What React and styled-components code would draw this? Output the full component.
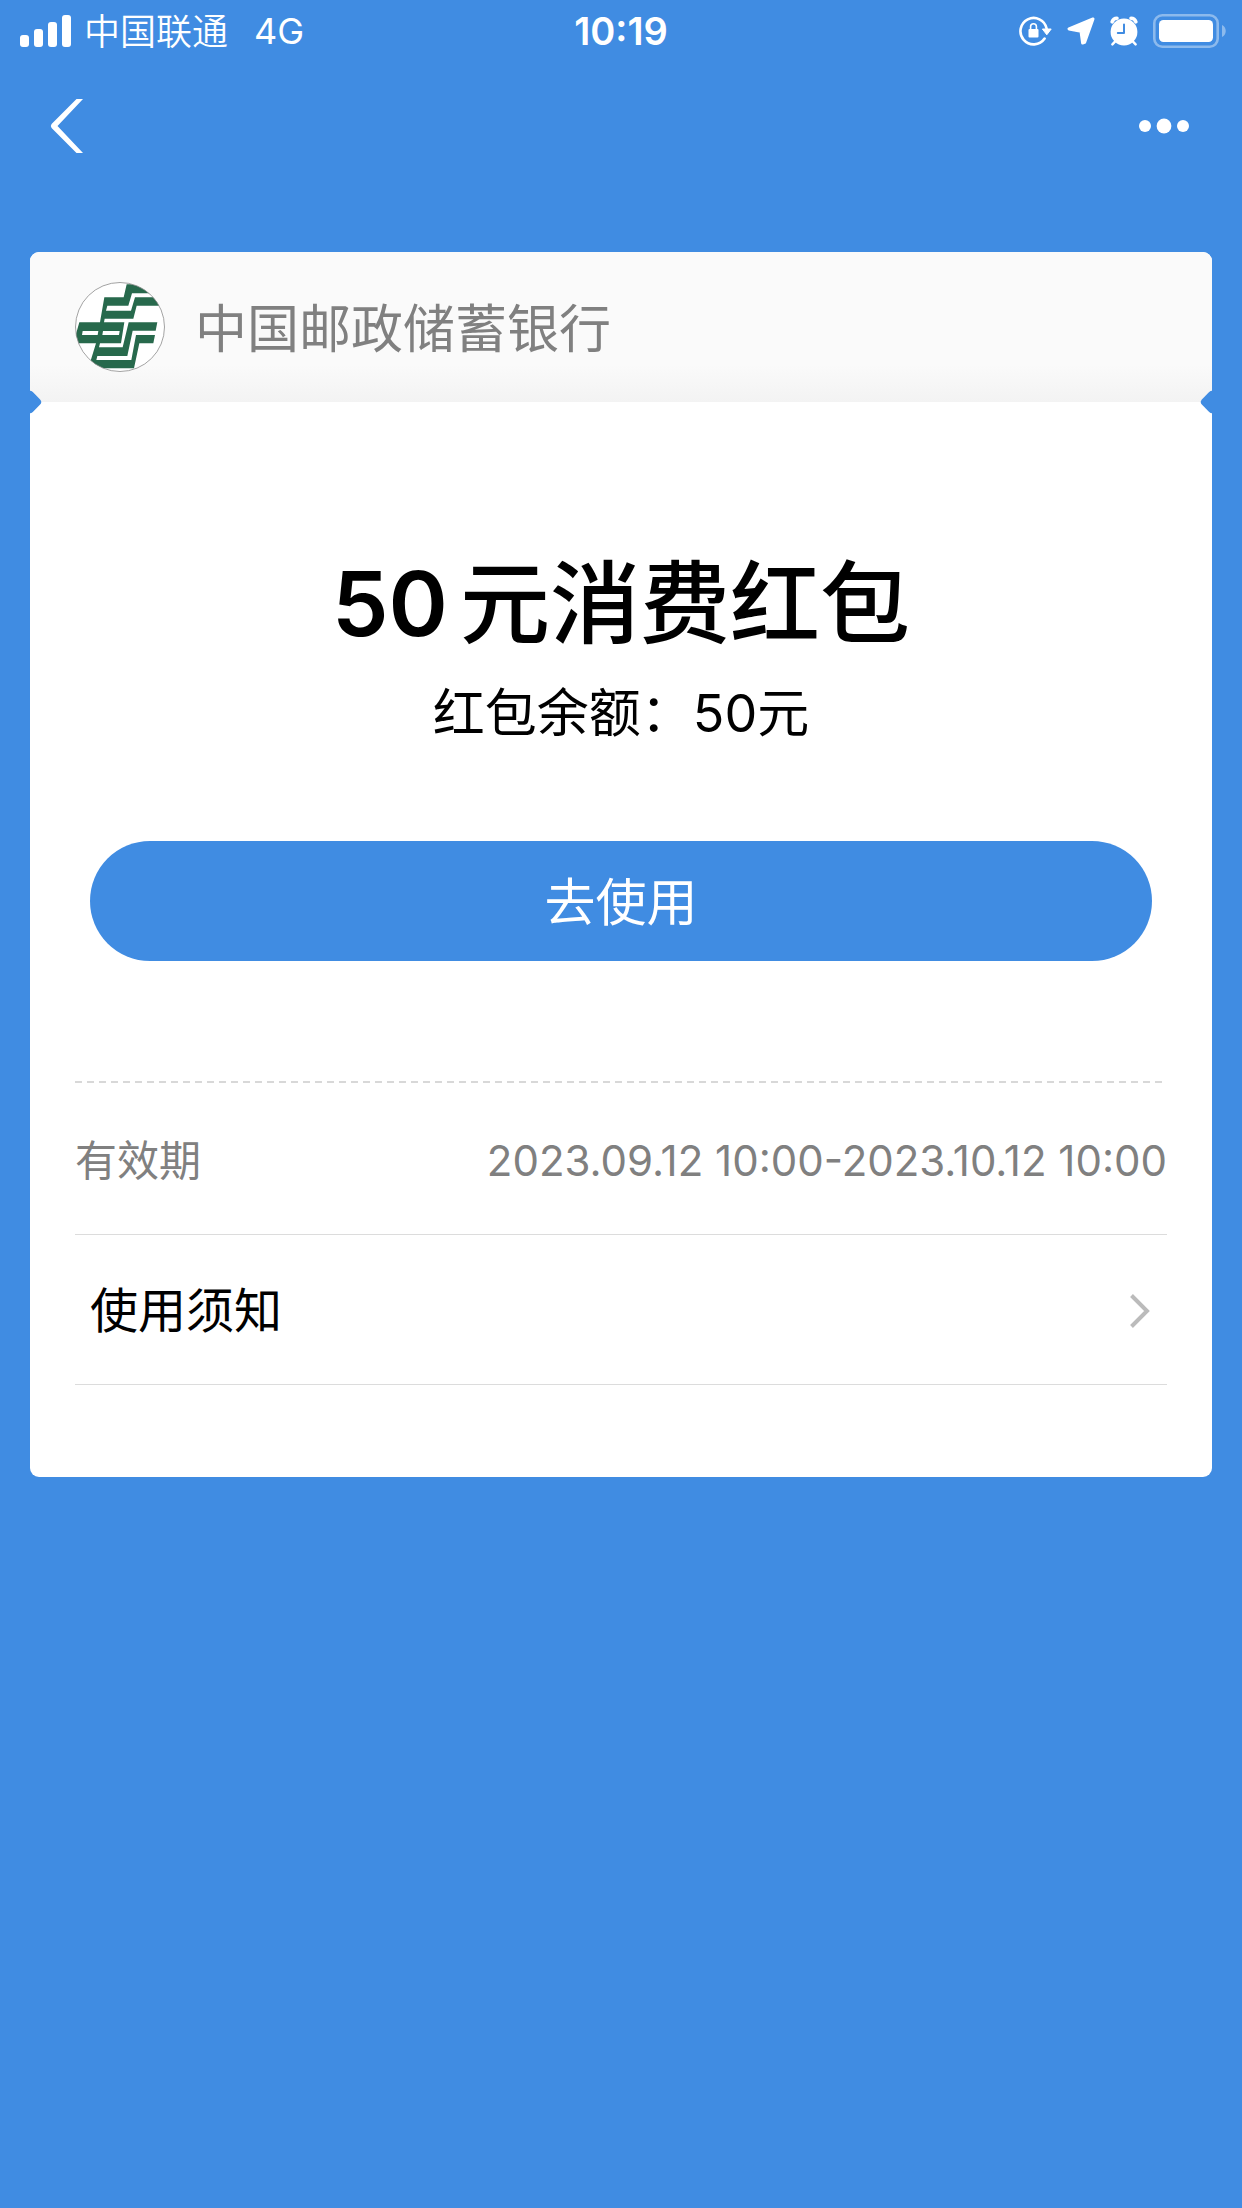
import React from "react";
import styled, { createGlobalStyle } from "styled-components";

const BLUE = "#408ce2";

const GlobalStyle = createGlobalStyle`
  * { box-sizing: border-box; }
  body {
    margin: 0;
    background: ${BLUE};
    font-family: Inter, "Noto Sans CJK SC", sans-serif;
    color: #000;
  }
  h1, h2, p, dl, dt, dd { margin: 0; font-weight: 400; }
  button { font: inherit; border: 0; padding: 0; background: none; cursor: pointer; }
  svg { display: block; flex: none; }
`;

const Page = styled.div`
  min-height: 100vh;
  display: flex;
  flex-direction: column;
`;

const StatusBar = styled.div`
  display: grid;
  grid-template-columns: 1fr auto 1fr;
  align-items: center;
  height: 62px;
  padding: 0 16px;
  color: #fff;
  font-size: 36px;
  line-height: 48px;
`;

const StatusSide = styled.div`
  display: flex;
  align-items: center;
  justify-content: ${(p) => (p.$end ? "flex-end" : "flex-start")};
  gap: ${(p) => (p.$end ? "15px" : "12px")};
  padding-left: 4px;
`;

const Carrier = styled.span`
  padding-top: 2px;
  font-weight: 350;
`;

const Network = styled.span`
  padding-left: 14px;
`;

const Clock = styled.time`
  font-size: 38px;
  font-weight: 600;
`;

const NavBar = styled.nav`
  display: flex;
  justify-content: space-between;
  align-items: center;
  height: 128px;
  padding: 0 49px 0 48px;
`;

const IconButton = styled.button`
  display: flex;
  align-items: center;
  height: 64px;
`;

const Card = styled.main`
  margin: 62px 30px 0;
  border-radius: 9px;
  overflow: hidden;
  background: #fff;
`;

const Issuer = styled.header`
  position: relative;
  display: flex;
  align-items: center;
  gap: 30px;
  height: 150px;
  padding: 0 45px;
  background: linear-gradient(#fafafa 75%, #f3f3f3);
  color: #808080;
  font-size: 52px;
  line-height: 72px;

  &::before,
  &::after {
    content: "";
    position: absolute;
    bottom: -9px;
    width: 18px;
    height: 18px;
    border-radius: 4px;
    background: ${BLUE};
    transform: rotate(45deg);
  }
  &::before { left: -9px; }
  &::after { right: -9px; }
`;

const IssuerName = styled.h2`
  padding-top: 6px;
  font-size: 52px;
`;

const Offer = styled.section`
  display: flex;
  flex-direction: column;
  align-items: center;
  padding: 142px 60px 120px;
`;

const OfferTitle = styled.h1`
  font-size: 90px;
  font-weight: 500;
  line-height: 120px;
`;

const Amount = styled.span`
  padding-right: 12px;
  font-weight: 600;
`;

const Balance = styled.p`
  padding-top: 14px;
  font-size: 52px;
  line-height: 72px;
`;

const UseButton = styled.button`
  && {
    width: 100%;
    height: 120px;
    margin-top: 91px;
    padding-top: 4px;
    border-radius: 60px;
    background: ${BLUE};
    color: #fff;
    font-size: 51px;
    line-height: 72px;
  }
`;

const Details = styled.section`
  padding: 0 45px 92px;
`;

const DashedRule = styled.div`
  height: 2px;
  background: repeating-linear-gradient(90deg, #d8d8d8 0 7px, transparent 7px 12px);
`;

const Validity = styled.dl`
  display: flex;
  justify-content: space-between;
  align-items: center;
  height: 152px;
  padding-top: 4px;
  border-bottom: 1px solid #dcdcdc;
  color: #808080;
  font-size: 42px;
  line-height: 60px;
`;

const NoticeRow = styled.button`
  && {
    display: flex;
    justify-content: space-between;
    align-items: center;
    width: 100%;
    height: 150px;
    padding: 2px 15px 0;
    border-bottom: 1px solid #dcdcdc;
    color: #000;
    font-size: 48px;
    line-height: 72px;
  }
`;

const SignalIcon = () => (
  <svg width="52" height="32" viewBox="0 0 52 32" fill="#fff">
    <rect x="0" y="20" width="9" height="12" rx="3" />
    <rect x="14" y="14" width="9" height="18" rx="3" />
    <rect x="28" y="7" width="9" height="25" rx="3" />
    <rect x="42" y="0" width="9" height="32" rx="3" />
  </svg>
);

const RotationLockIcon = () => (
  <svg width="33" height="30" viewBox="0 0 33 30" fill="none">
    <path d="M25.6 22.6A13.2 13.2 0 1 1 27.6 12.5" stroke="#fff" strokeWidth="2.6" strokeLinecap="round" />
    <path d="M23.4 13H32.2L27.8 18.8Z" fill="#fff" stroke="#fff" strokeLinejoin="round" />
    <rect x="9.5" y="13" width="10" height="8.5" rx="1" fill="#fff" />
    <path d="M11.6 13.5V10.6a2.9 2.9 0 0 1 5.8 0v2.9" stroke="#fff" strokeWidth="1.6" />
  </svg>
);

const LocationIcon = () => (
  <svg width="28" height="28" viewBox="0 0 28 28">
    <path d="M26 2 2 12 14 14.4 15.6 26 17.6 25.4Z" fill="#fff" stroke="#fff" strokeWidth="3" strokeLinejoin="round" />
  </svg>
);

const AlarmIcon = () => (
  <svg width="28" height="30" viewBox="0 0 28 30" fill="none">
    <circle cx="14" cy="16" r="13.4" fill="#fff" />
    <path d="M2.2 5.8A5 5 0 0 1 7 2.2M25.8 5.8A5 5 0 0 0 21 2.2" stroke="#fff" strokeWidth="3.6" strokeLinecap="round" />
    <path d="M5 25.6 2.4 28.4M23 25.6l2.6 2.8" stroke="#fff" strokeWidth="2.4" strokeLinecap="round" />
    <path d="M14 8.5V17H7.8" stroke={BLUE} strokeWidth="2" strokeLinecap="round" strokeLinejoin="round" />
  </svg>
);

const BatteryIcon = () => (
  <svg width="73" height="34" viewBox="0 0 73 34">
    <rect x="1.3" y="1.3" width="63.4" height="31.4" rx="8" fill="none" stroke="#fff" strokeOpacity=".4" strokeWidth="2.6" />
    <rect x="6" y="6" width="54" height="22" rx="4.5" fill="#fff" />
    <path d="M69 11c5 2 5 10 0 12Z" fill="#fff" fillOpacity=".4" />
  </svg>
);

const BackIcon = () => (
  <svg width="38" height="56" viewBox="0 0 38 56">
    <path d="M28.5 1h6.5L9.5 28 35 55h-6.5L3.6 30Q2 28 3.6 26Z" fill="#fff" />
  </svg>
);

const MoreIcon = () => (
  <svg width="56" height="18" viewBox="0 0 56 18" fill="#fff">
    <circle cx="8" cy="9" r="6" />
    <circle cx="27" cy="9" r="7.4" />
    <circle cx="46" cy="9" r="6" />
  </svg>
);

const ChevronIcon = () => (
  <svg width="24" height="36" viewBox="0 0 24 36" fill="none">
    <path d="M3.5 2.5 19 18 3.5 33.5" stroke="#bbb" strokeWidth="4" />
  </svg>
);

const BankLogo = () => (
  <svg width="90" height="90" viewBox="0 0 90 90">
    <clipPath id="badge">
      <circle cx="45" cy="45" r="44.5" />
    </clipPath>
    <circle cx="45" cy="45" r="45" fill="#fff" />
    <g clipPath="url(#badge)">
      <g transform="translate(-55 -42) scale(.33333)" fill="#27694c">
        <path d="M320 133H430V160H336L325 197H262L258 212H333L345 172H430V197H350L340 236H254L252 247H313L303 310H240L237 322H308L326 247H412L407 272H338L322 348H232L229 360H334L348 285H405L400 310H358L342 385H205L228 310H160L178 247H240L253 172H311Z" />
        <path d="M188 273H235L233 285H186ZM249 273H299L297 285H247Z" fill="#fff" />
      </g>
    </g>
    <circle cx="45" cy="45" r="44.5" fill="none" stroke="#8a8a8a" strokeWidth=".8" />
  </svg>
);

export default function App() {
  return (
    <Page>
      <GlobalStyle />
      <StatusBar>
        <StatusSide>
          <SignalIcon />
          <Carrier>中国联通</Carrier>
          <Network>4G</Network>
        </StatusSide>
        <Clock>10:19</Clock>
        <StatusSide $end>
          <RotationLockIcon />
          <LocationIcon />
          <AlarmIcon />
          <BatteryIcon />
        </StatusSide>
      </StatusBar>
      <NavBar>
        <IconButton aria-label="返回">
          <BackIcon />
        </IconButton>
        <IconButton aria-label="更多">
          <MoreIcon />
        </IconButton>
      </NavBar>
      <Card>
        <Issuer>
          <BankLogo />
          <IssuerName>中国邮政储蓄银行</IssuerName>
        </Issuer>
        <Offer>
          <OfferTitle>
            <Amount>50</Amount>元消费红包
          </OfferTitle>
          <Balance>红包余额：50元</Balance>
          <UseButton>去使用</UseButton>
        </Offer>
        <Details>
          <DashedRule />
          <Validity>
            <dt>有效期</dt>
            <dd>2023.09.12 10:00-2023.10.12 10:00</dd>
          </Validity>
          <NoticeRow>
            <span>使用须知</span>
            <ChevronIcon />
          </NoticeRow>
        </Details>
      </Card>
    </Page>
  );
}
